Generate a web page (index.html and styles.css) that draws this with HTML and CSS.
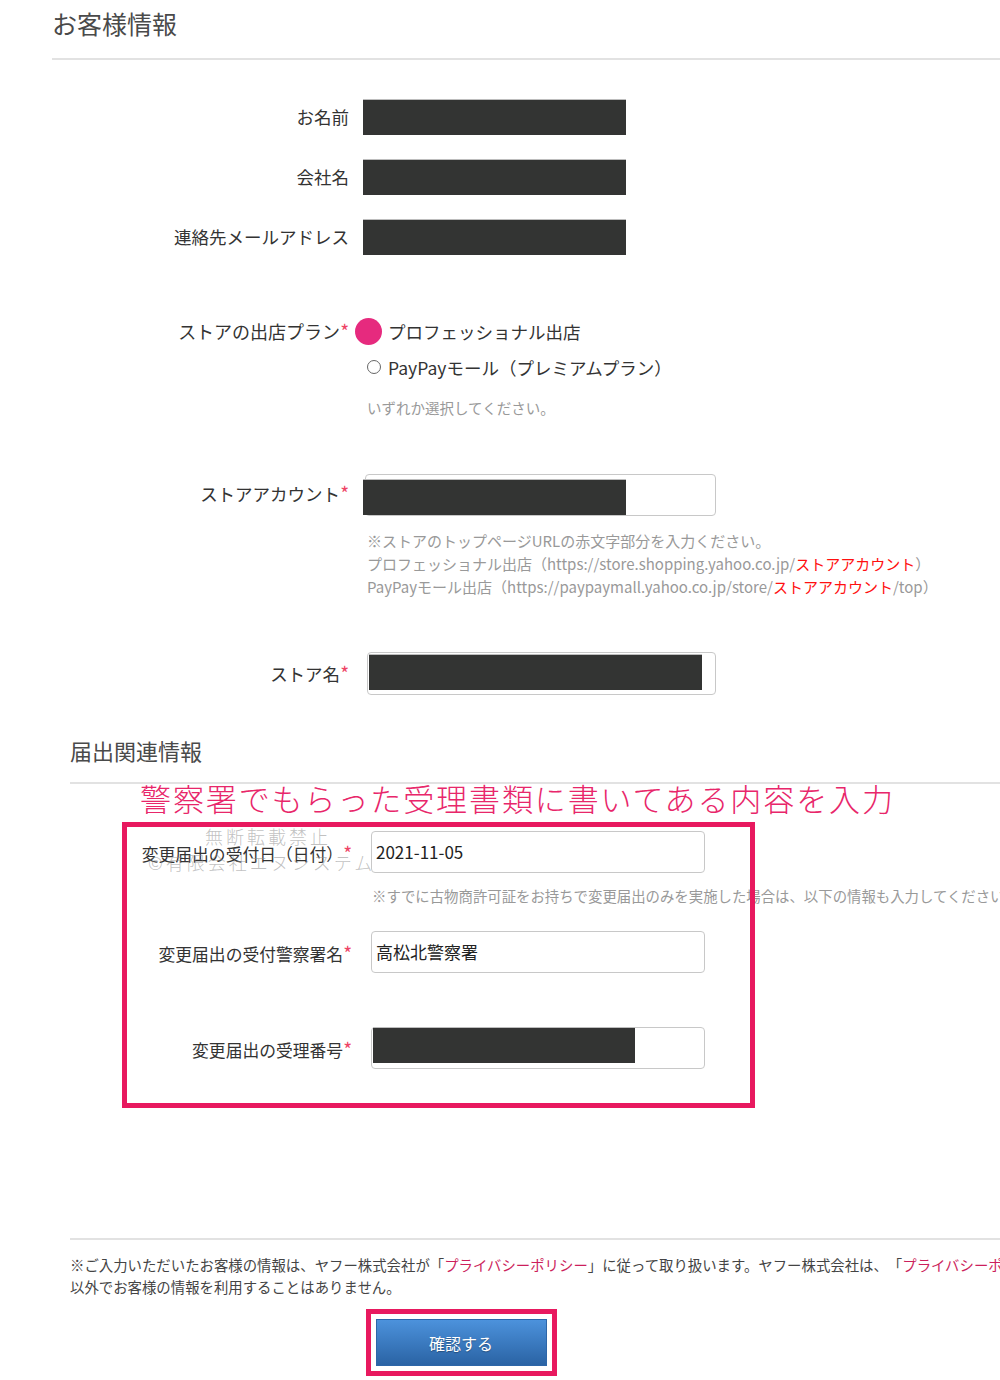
FILE: index.html
```html
<!DOCTYPE html>
<html lang="ja">
<head>
    <meta charset="UTF-8">
    <meta name="viewport" content="width=device-width, initial-scale=1.0">
    <title>お客様情報</title>
    <link rel="stylesheet" href="styles.css">
</head>
<body>
    <div class="page">
        <section class="customer">
            <h2 class="section-title">お客様情報</h2>

            <div class="form">
                <div class="row">
                    <div class="label">お名前</div>
                    <div class="field"><div class="mask"></div></div>
                </div>
                <div class="row">
                    <div class="label">会社名</div>
                    <div class="field"><div class="mask"></div></div>
                </div>
                <div class="row">
                    <div class="label">連絡先メールアドレス</div>
                    <div class="field"><div class="mask"></div></div>
                </div>

                <div class="row row-plan">
                    <div class="label">ストアの出店プラン<span class="req">*</span></div>
                    <div class="field">
                        <label class="option"><span class="radio"><span class="marker"></span></span>プロフェッショナル出店</label>
                        <label class="option"><span class="radio"></span>PayPayモール（プレミアムプラン）</label>
                        <p class="hint hint-plan">いずれか選択してください。</p>
                    </div>
                </div>

                <div class="row row-account">
                    <div class="label">ストアアカウント<span class="req">*</span></div>
                    <div class="field">
                        <div class="input input-account"><div class="mask"></div></div>
                        <div class="hint hint-url">
                            <p>※ストアのトップページURLの赤文字部分を入力ください。</p>
                            <p>プロフェッショナル出店（https://store.shopping.yahoo.co.jp/<span class="red">ストアアカウント</span>）</p>
                            <p>PayPayモール出店（https://paypaymall.yahoo.co.jp/store/<span class="red">ストアアカウント</span>/top）</p>
                        </div>
                    </div>
                </div>

                <div class="row row-store">
                    <div class="label">ストア名<span class="req">*</span></div>
                    <div class="field">
                        <div class="input input-store"><div class="mask"></div></div>
                    </div>
                </div>
            </div>
        </section>

        <section class="notice">
            <h2 class="section-title">届出関連情報</h2>
            <p class="memo">警察署でもらった受理書類に書いてある内容を入力</p>

            <div class="highlight">
                <span class="watermark wm-1">無断転載禁止</span>
                <span class="watermark wm-2">©有限会社エヌシステム</span>

                <div class="box-row box-row-date">
                    <div class="box-label">変更届出の受付日（日付）<span class="req">*</span></div>
                    <div class="input box-input">2021-11-05</div>
                </div>
                <p class="box-hint">※すでに古物商許可証をお持ちで変更届出のみを実施した場合は、以下の情報も入力してください。</p>

                <div class="box-row box-row-police">
                    <div class="box-label">変更届出の受付警察署名<span class="req">*</span></div>
                    <div class="input box-input">高松北警察署</div>
                </div>

                <div class="box-row box-row-number">
                    <div class="box-label">変更届出の受理番号<span class="req">*</span></div>
                    <div class="input box-input"><div class="mask"></div></div>
                </div>
            </div>
        </section>

        <footer class="footer">
            <p class="privacy">※ご入力いただいたお客様の情報は、ヤフー株式会社が「<a href="#">プライバシーポリシー</a>」に従って取り扱います。ヤフー株式会社は、「<a href="#">プライバシーポリシー</a>」に定める利用目的<br>以外でお客様の情報を利用することはありません。</p>
            <div class="actions">
                <div class="btn-frame">
                    <button class="btn-confirm">確認する</button>
                </div>
            </div>
        </footer>
    </div>
</body>
</html>
```

FILE: styles.css
```css
* {
    box-sizing: border-box;
    margin: 0;
    padding: 0;
}

body {
    font-family: "Noto Sans CJK JP", "Noto Sans", sans-serif;
    color: #333;
    background-color: #fff;
    overflow: hidden;
    text-spacing-trim: space-all;
}

.page {
    width: 1100px;
}

.section-title {
    font-size: 25px;
    font-weight: normal;
    line-height: 34px;
    color: #4a4a4a;
    border-bottom: 2px solid #e2e2e2;
}

/* お客様情報 */
.customer {
    padding-left: 52px;
}

.customer .section-title {
    margin-top: 6px;
    padding-bottom: 18px;
}

.form {
    margin-top: 39px;
}

.row {
    display: flex;
    align-items: center;
}

.row + .row {
    margin-top: 24px;
}

.label {
    width: 297px;
    text-align: right;
    font-size: 17.5px;
    line-height: 36px;
    color: #333;
    flex-shrink: 0;
}

.row-plan .label {
    font-size: 18px;
}

.req {
    color: #ee4466;
    font-size: 19px;
}

.field {
    margin-left: 14px;
}

.mask {
    width: 263px;
    height: 36px;
    background: #333433;
    border-top: 1px solid #bdbdbd;
}

.row.row-plan {
    margin-top: 58px;
    align-items: flex-start;
}

.option {
    display: flex;
    align-items: center;
    height: 36px;
    padding-left: 4px;
    font-size: 17.5px;
    color: #333;
}

.radio {
    position: relative;
    width: 14px;
    height: 14px;
    margin-right: 7px;
    border: 1px solid #666;
    border-radius: 50%;
    flex-shrink: 0;
}

.marker {
    position: absolute;
    left: -13px;
    top: -7.5px;
    width: 27px;
    height: 27px;
    border-radius: 50%;
    background: #e62a7e;
}

.hint {
    color: #999;
    padding-left: 4px;
}

.hint-plan {
    margin-top: 13px;
    font-size: 14.5px;
    line-height: 20px;
}

.row.row-account {
    margin-top: 56px;
    align-items: flex-start;
}

.row-account .label {
    line-height: 38px;
}

.input {
    border: 1px solid #c8c8c8;
    border-radius: 4px;
    background: #fff;
}

.input-account {
    width: 351px;
    height: 42px;
    margin-left: 2px;
}

.input-account .mask {
    margin: 4px 0 0 -3px;
}

.hint-url {
    margin-top: 13px;
    font-size: 15px;
    line-height: 23px;
}

.red {
    color: #ff1010;
}

.row.row-store {
    margin-top: 54px;
}

.input-store {
    width: 349px;
    height: 43px;
    margin-left: 4px;
}

.input-store .mask {
    width: 333px;
    margin: 1px 0 0 1px;
}

/* 届出関連情報 */
.notice {
    padding-left: 70px;
}

.notice .section-title {
    margin-top: 39px;
    font-size: 22px;
    line-height: 32px;
    padding-bottom: 16px;
}

.memo {
    margin: -3px 0 0 70px;
    font-size: 31px;
    font-weight: 300;
    line-height: 34px;
    letter-spacing: 1.9px;
    color: #e8266a;
    white-space: nowrap;
}

.highlight {
    position: relative;
    width: 633px;
    margin: 7px 0 0 52px;
    padding: 4px 0 34px;
    border: 5px solid transparent;
}

.highlight::after {
    content: "";
    position: absolute;
    top: -5px;
    left: -5px;
    right: -5px;
    bottom: -5px;
    border: 5px solid #e8195f;
    pointer-events: none;
}

.watermark {
    position: absolute;
    font-size: 18px;
    font-weight: 300;
    line-height: 22px;
    letter-spacing: 3px;
    color: rgba(140, 140, 140, 0.55);
    white-space: nowrap;
    z-index: 1;
}

.wm-1 {
    left: 78px;
    top: -2px;
}

.wm-2 {
    left: 21px;
    top: 24px;
}

.box-row {
    display: flex;
    align-items: center;
}

.box-label {
    width: 225px;
    text-align: right;
    font-size: 16.8px;
    color: #333;
    flex-shrink: 0;
}

.box-input {
    width: 334px;
    height: 42px;
    margin-left: 19px;
    padding: 0 4px;
    font-size: 17px;
    line-height: 40px;
    color: #222;
}

.box-input .mask {
    width: 262px;
    margin: -1px 0 0 -3px;
}

.box-hint {
    margin: 13px 0 0 245px;
    font-size: 14.4px;
    line-height: 20px;
    color: #999;
    white-space: nowrap;
}

.box-row-police {
    margin-top: 25px;
}

.box-row-number {
    margin-top: 54px;
}

/* フッター */
.footer {
    margin: 130px 0 0 70px;
    padding-top: 14px;
    border-top: 2px solid #e2e2e2;
}

.privacy {
    font-size: 14.4px;
    line-height: 22px;
    color: #444;
    white-space: nowrap;
}

.privacy a {
    color: #cc1f5c;
    text-decoration: none;
}

.actions {
    width: 782px;
    display: flex;
    justify-content: center;
    margin-top: 11px;
}

.btn-frame {
    padding: 5px;
    border: 5px solid #e8195f;
}

.btn-confirm {
    display: block;
    width: 171px;
    height: 47px;
    border: 1px solid #2d66a8;
    background: linear-gradient(to bottom, #4c92dc, #2a63a4);
    color: #fff;
    font-family: "Noto Sans CJK JP", "Noto Sans", sans-serif;
    font-size: 16px;
    text-shadow: 0 1px 1px rgba(0, 0, 0, 0.3);
    cursor: pointer;
}
```
